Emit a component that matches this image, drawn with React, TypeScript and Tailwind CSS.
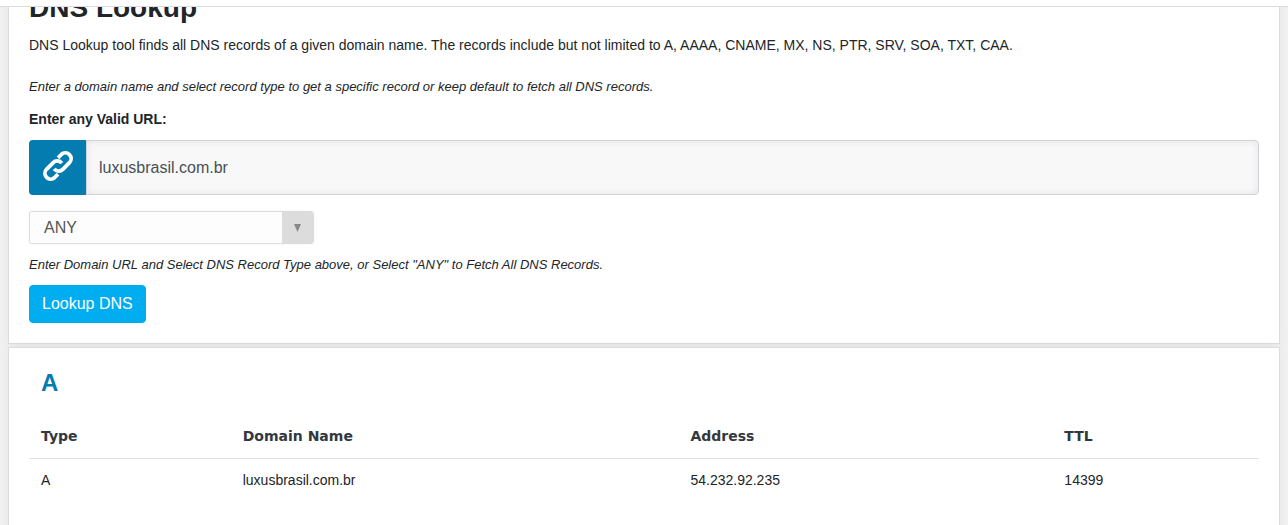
import React, { useState } from 'react';

const RECORD_TYPES = ['ANY', 'A', 'AAAA', 'CNAME', 'MX', 'NS', 'PTR', 'SRV', 'SOA', 'TXT', 'CAA'];

interface DnsRecord {
  type: string;
  domain: string;
  address: string;
  ttl: number;
}

const records: DnsRecord[] = [
  { type: 'A', domain: 'luxusbrasil.com.br', address: '54.232.92.235', ttl: 14399 },
];

const cardClass = 'border border-[#dcdcdc] bg-white px-5 shadow-[0_0_12px_rgba(0,0,0,0.05)]';
const thClass = "px-3 pt-[13px] pb-[11px] font-['DejaVu_Sans',sans-serif] font-bold text-[#32383e]";
const tdClass = 'px-3 pt-[11px] pb-3 leading-[21px]';

const LinkIcon: React.FC = () => (
  <svg width="36" height="36" viewBox="0 0 36 36" fill="none" stroke="currentColor" strokeWidth="3.8" aria-hidden="true">
    <path d="M18 9.8L21.3 6.5A5.8 5.8 0 0 1 29.5 14.7L22.8 21.4A5.8 5.8 0 0 1 14.2 20.9" />
    <path d="M18 26.2L14.7 29.5A5.8 5.8 0 0 1 6.5 21.3L13.2 14.6A5.8 5.8 0 0 1 21.8 15.1" />
  </svg>
);

const LookupForm: React.FC = () => {
  const [url, setUrl] = useState('luxusbrasil.com.br');
  const [recordType, setRecordType] = useState('ANY');

  return (
    <form className={`${cardClass} pt-5 pb-5`} onSubmit={(e) => e.preventDefault()}>
      <h1 className="mb-2.5 text-[28px] leading-[34px] font-bold">DNS Lookup</h1>
      <p className="mb-5 leading-[21px]">
        DNS Lookup tool finds all DNS records of a given domain name. The records include but not limited to A, AAAA,
        CNAME, MX, NS, PTR, SRV, SOA, TXT, CAA.
      </p>
      <p className="mb-3 text-[13px] leading-[21px] italic">
        Enter a domain name and select record type to get a specific record or keep default to fetch all DNS records.
      </p>
      <label htmlFor="url" className="mb-2.5 block leading-[21px] font-bold">
        Enter any Valid URL:
      </label>
      <div className="mb-4 flex h-[55px]">
        <span className="flex w-[57px] items-center justify-center rounded-l bg-[#047cb0] pb-1 text-white">
          <LinkIcon />
        </span>
        <input
          id="url"
          type="text"
          value={url}
          onChange={(e) => setUrl(e.target.value)}
          className="min-w-0 flex-1 rounded-r border border-[#ced4da] bg-[#f8f8f8] px-3 text-base text-[#495057] shadow-[inset_0_0_8px_rgba(0,0,0,0.08)] outline-none"
        />
      </div>
      <div className="relative mb-2.5 h-[33px] w-[285px] overflow-hidden rounded-[3px] border border-[#dcdcdc] shadow-[0_0_1px_rgba(0,0,0,0.2)]">
        <select
          aria-label="DNS record type"
          value={recordType}
          onChange={(e) => setRecordType(e.target.value)}
          className="block h-full w-full appearance-none bg-[#fdfdfd] pr-10 pl-3.5 text-base leading-none text-[#555555] outline-none"
        >
          {RECORD_TYPES.map((type) => (
            <option key={type}>{type}</option>
          ))}
        </select>
        <span className="pointer-events-none absolute inset-y-0 right-0 flex w-[31px] items-center justify-center bg-[#dcdcdc]">
          <svg width="7" height="8" viewBox="0 0 8 8" preserveAspectRatio="none" fill="#888888">
            <path d="M0 0h8L4 8z" />
          </svg>
        </span>
      </div>
      <p className="mb-2.5 text-[13px] leading-[21px] italic">
        Enter Domain URL and Select DNS Record Type above, or Select "ANY" to Fetch All DNS Records.
      </p>
      <button
        type="submit"
        className="block h-[38px] rounded border border-[#00a8ec] bg-[#00adf1] px-3 text-base text-white"
      >
        Lookup DNS
      </button>
    </form>
  );
};

const RecordsTable: React.FC = () => (
  <section className={`${cardClass} min-h-screen pt-5`}>
    <h2 className="mb-4 px-3 text-2xl leading-[29px] font-bold text-[#047cb0]">A</h2>
    <table className="w-full table-fixed text-left">
      <thead>
        <tr className="border-b border-[#dee2e6] leading-[21px]">
          <th className={`${thClass} w-[16.4%]`}>Type</th>
          <th className={`${thClass} w-[36.4%]`}>Domain Name</th>
          <th className={`${thClass} w-[30.4%]`}>Address</th>
          <th className={thClass}>TTL</th>
        </tr>
      </thead>
      <tbody>
        {records.map((record) => (
          <tr key={record.address}>
            <td className={tdClass}>{record.type}</td>
            <td className={tdClass}>{record.domain}</td>
            <td className={tdClass}>{record.address}</td>
            <td className={tdClass}>{record.ttl}</td>
          </tr>
        ))}
      </tbody>
    </table>
  </section>
);

const App: React.FC = () => (
  <div className="h-screen overflow-hidden bg-[#f1f1f1] font-['Liberation_Sans',Arial,sans-serif] text-sm text-[#212529]">
    <header className="relative z-10 h-[7px] border-b border-[#dcdcdc] bg-white" />
    {/* content is scrolled slightly under the header */}
    <main className="-mt-[37px] flex flex-col gap-[3px] px-2">
      <LookupForm />
      <RecordsTable />
    </main>
  </div>
);

export default App;
